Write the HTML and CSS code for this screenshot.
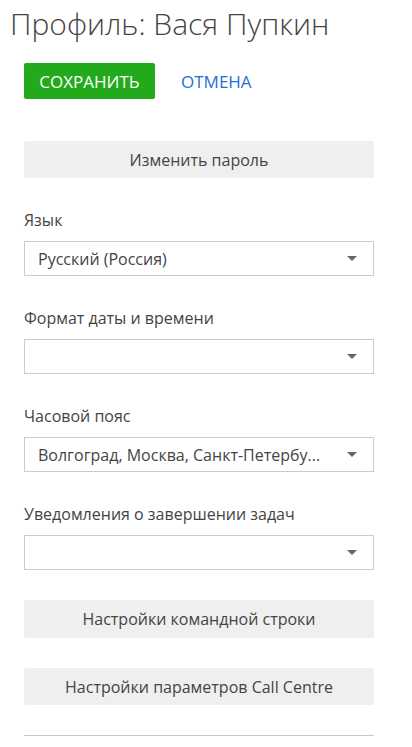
FILE: index.html
```html
<!DOCTYPE html>
<html lang="ru">
<head>
<meta charset="utf-8">
<title>Профиль</title>
<link rel="stylesheet" href="styles.css">
</head>
<body>
<div class="page">
  <h1 class="title">Профиль: Вася Пупкин</h1>
  <div class="content">
    <div class="actions">
      <button class="btn-save">СОХРАНИТЬ</button>
      <button class="btn-cancel">ОТМЕНА</button>
    </div>
    <button class="btn-gray first">Изменить пароль</button>
    <div class="field">
      <div class="label">Язык</div>
      <div class="select"><span class="value">Русский (Россия)</span><span class="arrow"></span></div>
    </div>
    <div class="field">
      <div class="label">Формат даты и времени</div>
      <div class="select"><span class="value"></span><span class="arrow"></span></div>
    </div>
    <div class="field">
      <div class="label">Часовой пояс</div>
      <div class="select"><span class="value">Волгоград, Москва, Санкт-Петербу...</span><span class="arrow"></span></div>
    </div>
    <div class="field last">
      <div class="label">Уведомления о завершении задач</div>
      <div class="select"><span class="value"></span><span class="arrow"></span></div>
    </div>
    <button class="btn-gray">Настройки командной строки</button>
    <button class="btn-gray final">Настройки параметров Call Centre</button>
    <div class="divider"></div>
  </div>
</div>
</body>
</html>
```

FILE: styles.css
```css
* { box-sizing: border-box; }
html, body { margin: 0; padding: 0; background: #fff; }
body {
  font-family: "Open Sans", "Noto Sans", sans-serif;
  color: #444;
}
.page { width: 412px; overflow: hidden; }
.title {
  margin: 0;
  padding: 3px 0 0 10px;
  font-size: 30px;
  font-weight: 300;
  line-height: 42px;
  color: #444;
}
.content {
  width: 350px;
  margin-left: 24px;
  display: flex;
  flex-direction: column;
}
.actions {
  display: flex;
  align-items: center;
  gap: 26px;
  margin-top: 18px;
  margin-bottom: 42px;
}
button {
  font-family: inherit;
  border: none;
  cursor: pointer;
}
.btn-save {
  height: 36px;
  width: 131px;
  background: #22aa1c;
  color: #fff;
  border-radius: 2px;
  font-size: 17px;
  padding: 0;
}
.btn-cancel {
  background: none;
  color: #1f6fd8;
  font-size: 17px;
  padding: 0;
}
.btn-gray {
  height: 38px;
  width: 100%;
  background: #efefef;
  border-radius: 2px;
  color: #444;
  font-size: 16px;
  padding: 0;
  margin-bottom: 30px;
}
.btn-gray.first { height: 37px; margin-bottom: 32px; }
.btn-gray.final { height: 37px; }
.field { display: flex; flex-direction: column; margin-bottom: 32px; }
.field.last { margin-bottom: 30px; }
.label {
  font-size: 16px;
  line-height: 20px;
  margin-bottom: 11px;
  color: #444;
}
.select {
  height: 35px;
  border: 1px solid #ccc;
  display: flex;
  align-items: center;
  padding: 0 16px 0 13px;
  gap: 14px;
}
.value {
  flex: 1;
  min-width: 0;
  font-size: 16px;
  color: #444;
  white-space: nowrap;
}
.arrow {
  width: 0;
  height: 0;
  border-left: 5px solid transparent;
  border-right: 5px solid transparent;
  border-top: 5px solid #666;
  flex: none;
}
.divider {
  height: 1px;
  background: #c8c8d2;
}
```
